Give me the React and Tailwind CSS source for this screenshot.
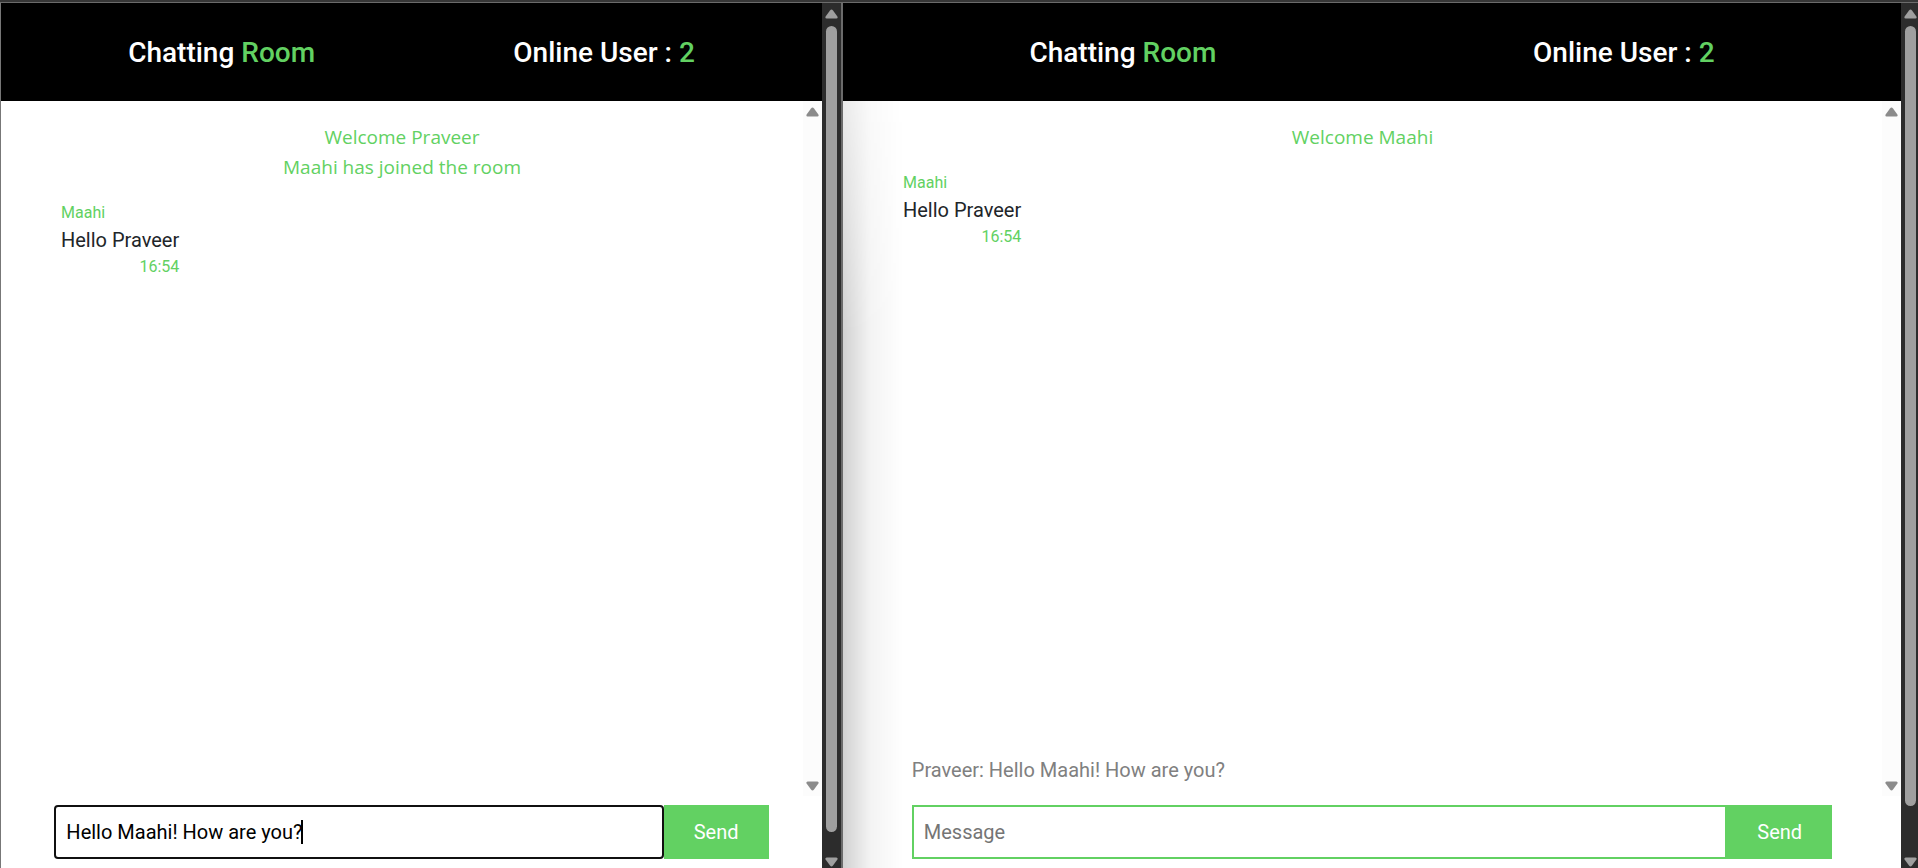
import React, { useState } from 'react';

function Arrow({ down = false, className }) {
  return (
    <svg
      width="19"
      height="10"
      viewBox="0 0 19 10"
      aria-hidden="true"
      className={`shrink-0 ${className}`}
    >
      <path
        d={
          down
            ? 'M4.6 0.5H14.4Q16.2 0.8 15.4 2.5L11 8.6Q9.5 10.5 8 8.6L3.6 2.5Q2.8 0.8 4.6 0.5Z'
            : 'M4.6 9.5H14.4Q16.2 9.2 15.4 7.5L11 1.4Q9.5 -0.5 8 1.4L3.6 7.5Q2.8 9.2 4.6 9.5Z'
        }
        fill="currentColor"
      />
    </svg>
  );
}

function PageScrollbar({ className, gapClass }) {
  return (
    <div
      className={`flex shrink-0 flex-col items-start overflow-hidden bg-[#2c2c2c] pt-[6px] pb-[1px] ${className}`}
    >
      <Arrow className="text-[#9f9f9f]" />
      <div className="mt-[7px] ml-1 w-[11px] flex-1 rounded-full bg-[#9f9f9f]" />
      <div className={`shrink-0 ${gapClass}`} />
      <Arrow down className="text-[#9f9f9f]" />
    </div>
  );
}

function Message({ name, text, time }) {
  return (
    <div className="mt-[17px] ml-[60px] flex w-fit flex-col">
      <span className="text-base leading-[27px] text-[#62d162]">{name}</span>
      <span className="text-xl leading-7 text-[#212529]">{text}</span>
      <span className="self-end text-base leading-[25px] text-[#62d162]">{time}</span>
    </div>
  );
}

function ChatWindow({ notices, typing, initial = '', focused = false, shaded = false, scrollbarClass, gapClass, className }) {
  const [value, setValue] = useState(initial);
  return (
    <section className={`flex min-w-0 ${className}`}>
      <div className="relative flex min-w-0 flex-1 flex-col bg-white">
        {shaded && (
          <div className="pointer-events-none absolute inset-y-0 left-0 w-[60px] bg-linear-to-r from-[#0000002e] via-[#0000000c] via-45% to-transparent mask-[linear-gradient(to_bottom,rgba(0,0,0,0.45)_98px,black_330px)]" />
        )}
        <header className="relative flex h-[98px] shrink-0 items-center justify-around bg-black px-7 pt-[2px] text-[28px] leading-8 font-medium text-white">
          <h1>
            Chatting <span className="text-[#62d162]">Room</span>
          </h1>
          <h2>
            Online User : <span className="text-[#62d162]">2</span>
          </h2>
        </header>
        <main className="relative flex min-h-0 flex-1">
          <div className="flex min-w-0 flex-1 flex-col pt-[21px]">
            <div className="text-center font-['Open_Sans',sans-serif] text-[19px] leading-[30px] text-[#62d162]">
              {notices.map((n) => (
                <p key={n}>{n}</p>
              ))}
            </div>
            <Message name="Maahi" text="Hello Praveer" time="16:54" />
          </div>
          <div className="flex w-[19px] shrink-0 flex-col justify-between bg-[#fcfcfc] pt-[6px] pb-[5px] text-[#8b8b8b]">
            <Arrow />
            <Arrow down />
          </div>
          {typing && (
            <p className="absolute bottom-[11px] left-[6.5%] text-xl leading-[30px] text-[#808080]">{typing}</p>
          )}
        </main>
        <form
          className="relative mx-auto my-[9px] flex h-[54px] w-[87%] shrink-0"
          onSubmit={(e) => e.preventDefault()}
        >
          <div className="relative flex min-w-0 flex-1">
            <input
              type="text"
              aria-label="Message"
              placeholder="Message"
              autoComplete="off"
              value={value}
              onChange={(e) => setValue(e.target.value)}
              className={`w-full min-w-0 border-2 bg-white px-[10px] text-xl text-black outline-none placeholder:text-[#757575] ${
                focused ? 'rounded-[4px] border-[#101010]' : 'border-[#62d162]'
              }`}
            />
            {focused && (
              <span className="pointer-events-none absolute top-[15px] left-[247px] h-6 w-[2px] bg-black" />
            )}
          </div>
          <button type="submit" className="w-[105px] shrink-0 bg-[#62d162] text-xl text-white">
            Send
          </button>
        </form>
      </div>
      <PageScrollbar className={scrollbarClass} gapClass={gapClass} />
    </section>
  );
}

export default function App() {
  return (
    <div className="flex h-screen flex-col border-t-2 border-[#363636] bg-white font-[Roboto,sans-serif]">
      <div className="h-px shrink-0 bg-[#6b6b6b]" />
      <div className="grid min-h-0 flex-1 grid-cols-[843fr_1075fr] grid-rows-1">
        <ChatWindow
          className="border-r-2 border-l border-r-[#6b6b6b] border-l-[#777777]"
          notices={['Welcome Praveer', 'Maahi has joined the room']}
          initial="Hello Maahi! How are you?"
          focused
          scrollbarClass="w-[19px]"
          gapClass="h-[25px]"
        />
        <ChatWindow
          notices={['Welcome Maahi']}
          typing="Praveer: Hello Maahi! How are you?"
          shaded
          scrollbarClass="w-[17px]"
          gapClass="h-[51px]"
        />
      </div>
    </div>
  );
}
